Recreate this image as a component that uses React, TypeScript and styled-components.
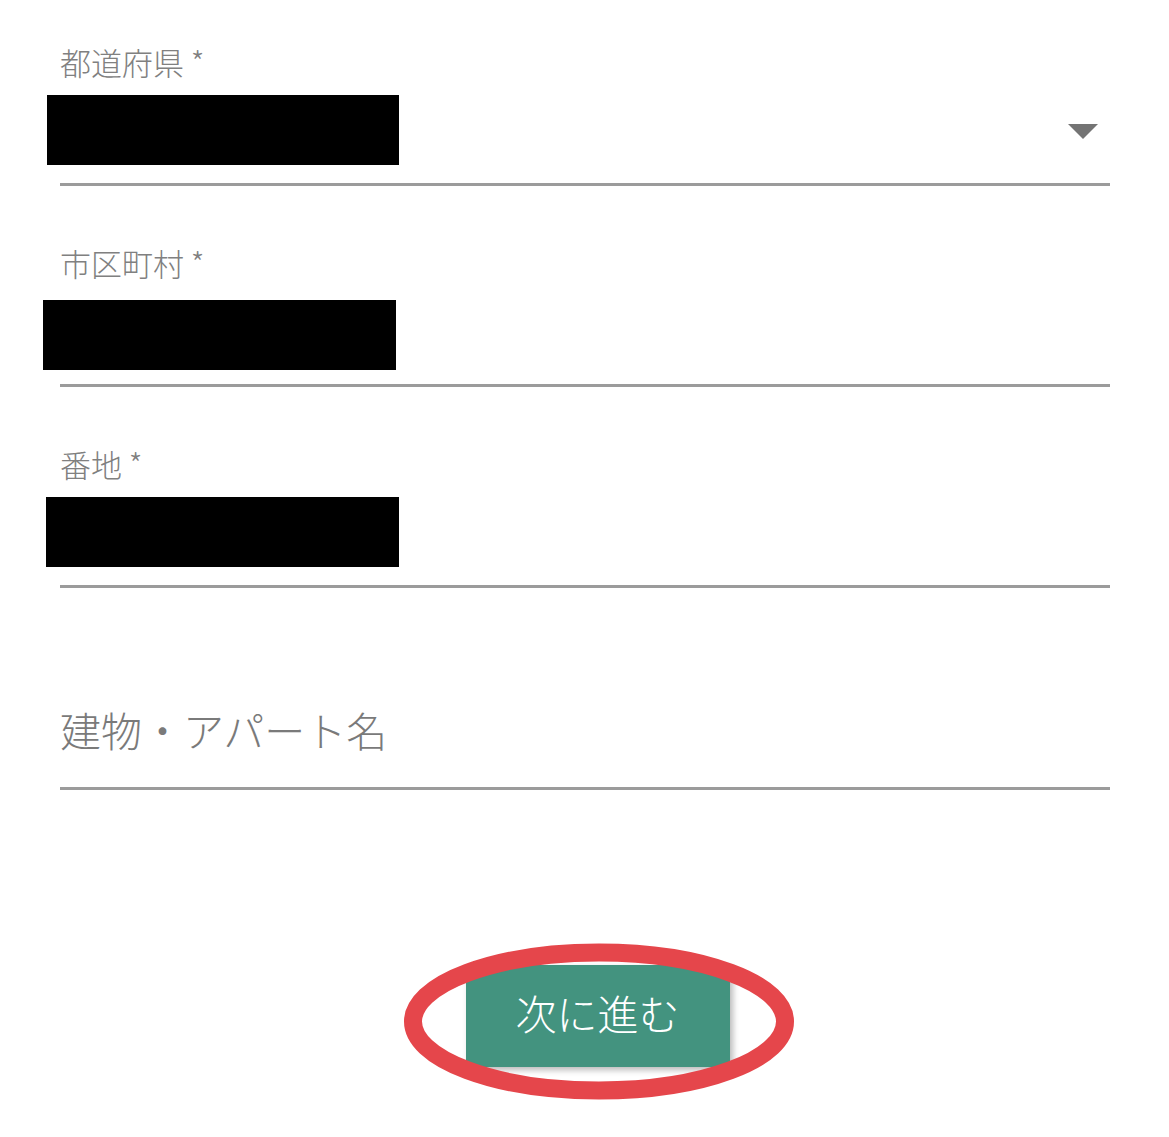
import styled, { createGlobalStyle } from "styled-components";

const GlobalStyle = createGlobalStyle`
  html, body {
    margin: 0;
    padding: 0;
    background: #ffffff;
  }
  body {
    font-family: "Noto Sans CJK JP", "Noto Sans", sans-serif;
  }
`;

interface IField {
    label?: string;
    required?: boolean;
    select?: boolean;
    redact?: { shift: number; width: number };
    placeholder?: string;
    first?: boolean;
    gap?: number;
}

const fields: IField[] = [
    { label: "都道府県", required: true, select: true, redact: { shift: -13, width: 352 }, first: true },
    { label: "市区町村", required: true, redact: { shift: -17, width: 353 }, gap: 17 },
    { label: "番地", required: true, redact: { shift: -14, width: 353 } },
    { placeholder: "建物・アパート名" },
];

function Field({ label, required, select, redact, placeholder, first, gap = 13 }: IField) {
    if (placeholder) {
        return (
            <FieldBox>
                <Placeholder>{placeholder}</Placeholder>
                <Underline />
            </FieldBox>
        );
    }
    return (
        <FieldBox first={first}>
            <Label gap={gap}>
                {label}
                {required && " *"}
            </Label>
            <ValueRow after={31 - gap}>
                {redact && <Redaction shift={redact.shift} w={redact.width} />}
                {select && (
                    <Arrow width="30" height="15" viewBox="0 0 30 15">
                        <polygon points="0,0 30,0 15,15" fill="#747474" />
                    </Arrow>
                )}
            </ValueRow>
            <Underline />
        </FieldBox>
    );
}

export default function App() {
    return (
        <>
            <GlobalStyle />
            <Page>
                <Form>
                    {fields.map((f, i) => (
                        <Field key={i} {...f} />
                    ))}
                </Form>
                <ButtonRow>
                    <ButtonWrap>
                        <NextButton type="button">次に進む</NextButton>
                        <Circle width="390" height="157" viewBox="0 0 390 157">
                            <ellipse cx="195" cy="78.5" rx="186" ry="69" fill="none" stroke="#e5464b" strokeWidth="18" />
                        </Circle>
                    </ButtonWrap>
                </ButtonRow>
            </Page>
        </>
    );
}

const Page = styled.div`
  min-height: 1137px;
  padding: 0 59px 0 60px;
  box-sizing: border-box;
`;

const Form = styled.div`
  display: flex;
  flex-direction: column;
`;

const FieldBox = styled.div<{ first?: boolean }>`
  display: flex;
  flex-direction: column;
  padding-top: ${props => (props.first ? "42px" : "57px")};
`;

const Label = styled.div<{ gap: number }>`
  font-size: 31px;
  font-weight: 300;
  line-height: 40px;
  color: #808080;
  margin-bottom: ${props => props.gap}px;
`;

const ValueRow = styled.div<{ after: number }>`
  height: 70px;
  display: flex;
  align-items: center;
  justify-content: space-between;
  margin-bottom: ${props => props.after}px;
`;

const Redaction = styled.div<{ shift: number; w: number }>`
  width: ${props => props.w}px;
  height: 70px;
  background: #000000;
  margin-left: ${props => props.shift}px;
`;

const Arrow = styled.svg`
  margin-left: auto;
  margin-right: 12px;
  margin-top: 2px;
`;

const Placeholder = styled.div`
  font-size: 41px;
  font-weight: 300;
  line-height: 60px;
  color: #7a7a7a;
  padding-top: 54px;
  margin-bottom: 28px;
`;

const Underline = styled.div`
  height: 3px;
  background: #9b9b9b;
`;

const ButtonRow = styled.div`
  display: flex;
  justify-content: center;
  padding-left: 25px;
  margin-top: 175px;
`;

const ButtonWrap = styled.div`
  position: relative;
`;

const NextButton = styled.button`
  width: 264px;
  height: 102px;
  padding: 0 0 8px;
  border: 0;
  border-radius: 2px;
  background: #43937f;
  color: #ffffff;
  font-family: "Noto Sans CJK JP", "Noto Sans", sans-serif;
  font-size: 41px;
  font-weight: 300;
  box-shadow: 3px 3px 6px rgba(0, 0, 0, 0.28);
  cursor: pointer;
`;

const Circle = styled.svg`
  position: absolute;
  left: -62px;
  top: -22px;
  pointer-events: none;
`;
